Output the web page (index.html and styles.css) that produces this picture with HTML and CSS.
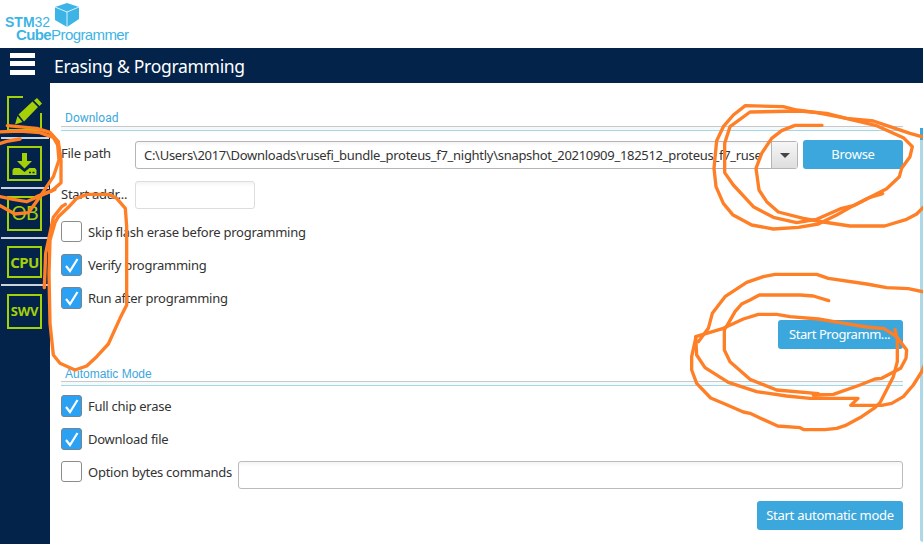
FILE: index.html
```html
<!DOCTYPE html>
<html lang="en">
<head>
<meta charset="utf-8">
<title>STM32CubeProgrammer</title>
<link rel="stylesheet" href="styles.css">
</head>
<body>
<header class="brand">
  <div class="brand-top"><span class="stm"><b>STM</b>32</span>
    <svg class="cube" viewBox="0 0 26 24"><path d="M1 4 13 0 25 4 25 16 13 24 1 17Z" fill="#3cb4e6"/><path d="M1 4 13 9 25 4M13 9V24" fill="none" stroke="#fff" stroke-width=".8"/></svg>
  </div>
  <div class="product"><b>Cube</b>Programmer</div>
</header>
<div class="titlebar">
  <div class="menu"><i></i><i></i><i></i></div>
  <h1>Erasing &amp; Programming</h1>
</div>
<div class="body">
  <nav>
    <div class="tab pencil"><svg viewBox="0 0 36 36"><path d="M16 1H1V34H34V17" fill="none" stroke="#a4d007" stroke-width="2"/><path d="M8 28.500 10.500 20 15.500 26ZM11.500 18.500 25.500 5.500 31 11 17 25.500ZM27 4.500 30 2 35 7.500 32.500 10Z" fill="#a4d007"/></svg></div>
    <div class="tab"><div class="box"><svg viewBox="0 0 31 31"><path d="M13 5H18V13H23L15.500 20.500 8 13H13Z" fill="#a4d007"/><path d="M5 20H10.500L15.500 24 20.500 20H26L27.500 22V27H3.500V22Z" fill="#a4d007"/><path d="M20 24.500h2M23.500 24.500h2" stroke="#03234b" stroke-width="1.500"/></svg></div></div>
    <div class="tab"><div class="box ob">OB</div></div>
    <div class="tab cpu"><div class="box">CPU</div></div>
    <div class="tab"><div class="box swv">SWV</div></div>
  </nav>
  <main>
    <section>
      <h2><span>Download</span></h2>
      <div class="row path">
        <label class="lbl filepath">File path</label>
        <div class="combo"><div class="value"><span>C:\Users\2017\Downloads\rusefi_bundle_proteus_f7_nightly\snapshot_20210909_182512_proteus_f7_ruse</span></div><div class="arrow"><i></i></div></div>
        <button class="browse">Browse</button>
      </div>
      <div class="row addr"><label class="lbl">Start addr...</label><div class="field disabled"></div></div>
      <div class="check"><i></i><span>Skip flash erase before programming</span></div>
      <div class="check"><i class="on"><svg viewBox="0 0 19 20"><path d="M4 11 8 16 15.500 4" /></svg></i><span>Verify programming</span></div>
      <div class="check"><i class="on"><svg viewBox="0 0 19 20"><path d="M4 11 8 16 15.500 4" /></svg></i><span>Run after programming</span></div>
      <div class="action"><button class="start">Start Programm...</button></div>
    </section>
    <section class="auto">
      <h2><span>Automatic Mode</span></h2>
      <div class="check"><i class="on"><svg viewBox="0 0 19 20"><path d="M4 11 8 16 15.500 4" /></svg></i><span>Full chip erase</span></div>
      <div class="check"><i class="on"><svg viewBox="0 0 19 20"><path d="M4 11 8 16 15.500 4" /></svg></i><span>Download file</span></div>
      <div class="check"><i></i><span class="t-opt">Option bytes commands</span><div class="field wide"></div></div>
      <div class="action auto-action"><button class="automode">Start automatic mode</button></div>
    </section>
  </main>
  <aside><div class="head"></div><div class="strip"></div></aside>
</div>
<svg class="ink" viewBox="0 0 923 544">
  <g transform="translate(690 90) scale(.33333)">
    <path d="M396 106H315L275 122 245 145 215 190 198 235 207 300 230 335 265 366 340 385 400 396 480 408H584L650 388 680 372 702 350"/>
    <path d="M702 142 660 130 600 110 550 93 470 85 380 68 320 60 280 50 166 47 130 75 100 110 80 152 72 235 78 290 100 340 128 374 185 405 250 417 325 412 385 402 440 375 490 347 540 322 578 311"/>
    <path d="M180 66 120 110 104 160V248L130 285 190 350 250 382 320 398 380 388 455 355 490 347 590 296 628 260 635 235 660 200 667 170 640 143 560 107 480 88 410 70 330 63Z"/>
  </g>
  <g transform="translate(680 260) scale(.33333)">
    <path d="M446 122 400 108 360 105H238L210 120 185 132 165 155 148 185 133 210V270L150 305 210 358 290 390 415 401"/>
    <path d="M733 96 685 86 620 83 560 72 445 55 410 43H285L250 50 200 67 135 110 97 160 85 205 55 245"/>
    <path d="M733 315 725 335 700 375 670 410 635 430 605 436H512L534 415H390L320 408 230 395 145 367 75 323 50 285 47 230 130 205 190 177 235 163H290L330 170 415 177 480 188 560 201 612 206 650 230 680 270 678 295 662 325 605 355 585 357 540 375 460 403 400 405"/>
    <path d="M645 208 652 240V305L640 350 600 428 585 443 545 470 495 497 470 505 435 509H372L360 503 293 498 240 474 210 460 190 456 140 434 92 414 50 370 35 330V290L47 235"/>
  </g>
  <g transform="translate(0 80) scale(.33333)">
    <path d="M22 137 110 145 150 157 175 185 183 240V308L155 333 110 352 80 365 40 358 0 350"/>
    <path d="M-5 156 60 153 120 158 160 172 173 195 177 240 160 290 120 350 85 398 45 402 -5 374"/>
    <path d="M60 177 20 184 -5 192"/>
  </g>
  <g transform="translate(0 190) scale(.33333)">
    <path d="M110 20 165 -2"/>
    <path d="M196 43 185 50 160 82 137 190 133 293"/>
    <path d="M165 98 175 80 205 52 230 25 260 13H325L350 25 376 55 380 110V345L360 385 325 462 290 500 260 528 225 540 180 520 160 495 150 400 147 250 150 150 165 98"/>
  </g>
</svg>
</body>
</html>
```
FILE: styles.css
```css
* { box-sizing: border-box; }
body { margin: 0; width: 923px; height: 544px; overflow: hidden; background: #fff; position: relative; font: 13px/20px "Noto Sans", "Open Sans", sans-serif; letter-spacing: -.26px; color: #333; }
.brand { height: 48px; padding: 3px 0 0 5px; color: #3cb4e6; font-family: "Liberation Sans", Arial, sans-serif; letter-spacing: 0; }
.brand-top { display: flex; height: 25px; gap: 3px; }
.stm { font-size: 14px; line-height: 12px; padding-top: 13px; width: 46px; }
.cube { width: 26px; height: 24px; }
.product { font-size: 15px; line-height: 14px; padding-left: 11px; letter-spacing: -.6px; }
.titlebar { height: 35px; background: #03234b; display: flex; align-items: center; color: #fff; }
.menu { width: 44px; padding-left: 10px; display: grid; gap: 3.5px; margin-top: -4px; }
.menu i { display: block; width: 25px; height: 5px; background: #fff; }
h1 { margin: 0 0 0 10px; font-size: 17.5px; font-weight: 400; line-height: 24px; letter-spacing: -.3px; }
.body { display: flex; height: 461px; }
nav { width: 50px; flex: none; background: #03234b; padding: 13px 1px 0; }
.tab { height: 50px; padding-left: 6px; border-bottom: 2px solid #ccd3dc; display: flex; align-items: center; }
.pencil { height: 43px; padding-bottom: 5px; }
.pencil svg { width: 36px; height: 36px; flex: none; }
.cpu { height: 47px; }
.tab:last-child { border: 0; }
.box { width: 35px; height: 35px; border: 2px solid #a4d007; color: #a4d007; font-size: 15px; font-weight: 700; display: grid; place-items: center; line-height: 20px; letter-spacing: -.6px; }
.cpu .box { height: 32px; }
.box.ob { font-size: 20px; font-weight: 400; letter-spacing: -1px; }
.box.swv { font-size: 13px; letter-spacing: -.2px; }
.box svg { width: 31px; height: 31px; }
main { width: 863px; flex: none; padding: 26px 10px 0 11px; }
h2 { margin: 0 0 10px; height: 20px; font: 12px/18px Roboto, sans-serif; letter-spacing: 0; color: #3ca7dc; }
h2 span { display: block; height: 17px; padding-left: 4px; }
h2::after { content: ""; display: block; height: 3px; border-top: 1px solid #c8c8c8; border-bottom: 1px solid #a5d8e6; background: #f4fafc; }
.auto h2 { font-family: "Liberation Sans", Arial, sans-serif; line-height: 20px; margin-top: -1px; margin-bottom: 11px; }
.row { display: flex; }
.lbl { width: 74px; flex: none; }
.path { height: 40px; }
.filepath { padding-top: 4px; }
.combo { margin-top: 2px; width: 663px; height: 28px; border: 1px solid #b5b5b5; border-radius: 3px; display: flex; background: linear-gradient(#f4f4f4, #fff 4px); }
.value { flex: 1; padding: 3px 0 0 8px; white-space: nowrap; letter-spacing: -.29px; }
.value span { display: block; }
.arrow { width: 26px; flex: none; border-left: 1px solid #b5b5b5; background: linear-gradient(#f6f6f6, #dedede); display: grid; place-items: center; }
.arrow i { border: 5px solid transparent; border-top-color: #444; border-bottom: 0; }
button { border: 0; border-radius: 3px; background: #3ca7dc; color: #fff; font: 13px/20px "Noto Sans", sans-serif; letter-spacing: -.26px; height: 29px; padding: 0 0 1px; white-space: nowrap; }
.browse { width: 100px; margin: 1px 0 0 5px; }
.addr { margin-top: 2px; height: 40px; }
.addr .lbl { padding-top: 3px; }
.field { border: 1px solid #bbb; border-radius: 3px; height: 28px; background: linear-gradient(#f4f4f4, #fff 5px); }
.disabled { width: 120px; border-color: #ddd; }
.check { display: flex; height: 33px; }
.check i { width: 21px; height: 21px; border: 1px solid #8c8c8c; border-radius: 3px; flex: none; }
.check i.on { height: 22px; background: #2aa1f3; border-color: #77838e; }
.check i svg { display: block; width: 19px; height: 20px; }
.check path { fill: none; stroke: #fff; stroke-width: 2.2; }
.check span { margin-left: 6px; line-height: 22px; white-space: nowrap; }
.action { display: flex; justify-content: flex-end; height: 45px; }
.start { width: 125px; padding-right: 2px; letter-spacing: -.45px; }
.wide { flex: 1; margin-left: 6px; }
.automode { width: 146px; }
.auto-action { padding-top: 7px; }
aside { width: 10px; padding: 45px 0 0 7px; }
.head { height: 60px; background: linear-gradient(#3ca7dc 12px, #add8e6 12px); border-bottom: 1px solid #ccc; }
.strip { height: 354px; background: #add8e6; border-bottom-left-radius: 3px; }
.ink { position: absolute; left: 0; top: 0; width: 923px; height: 544px; }
.ink path { fill: none; stroke: #ff7f27; stroke-width: 10; stroke-linecap: round; stroke-linejoin: round; }
```
